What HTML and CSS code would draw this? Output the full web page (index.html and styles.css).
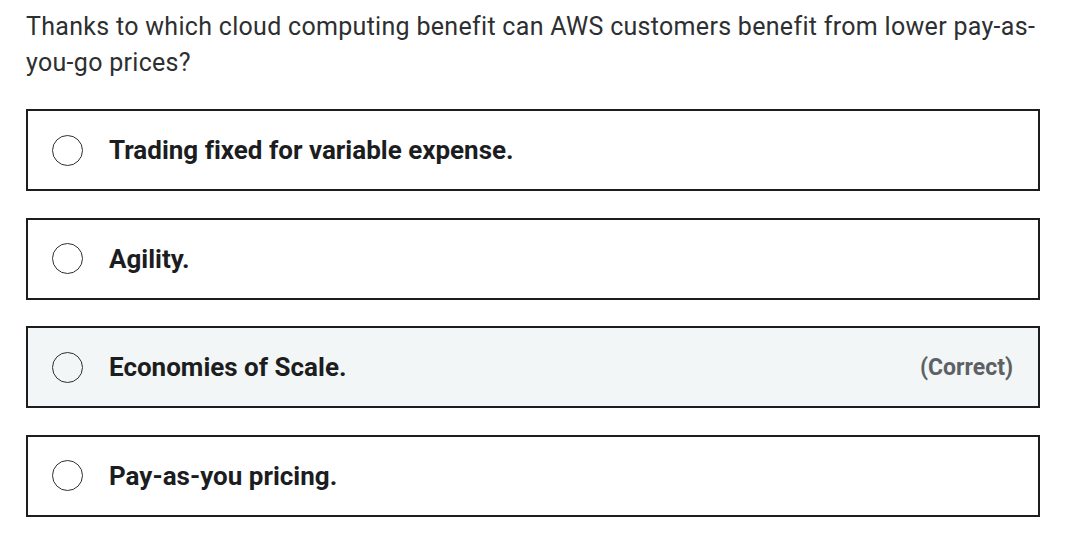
FILE: index.html
```html
<!DOCTYPE html>
<html lang="en">
<head>
    <meta charset="UTF-8">
    <title>Quiz question</title>
    <link rel="stylesheet" href="styles.css">
</head>
<body>
    <div class="question">
        <p class="prompt">Thanks to which cloud computing benefit can AWS customers benefit from lower pay-as-you-go prices?</p>

        <ul class="answers">
            <li class="answer">
                <span class="radio"></span>
                <span class="answer-text">Trading fixed for variable expense.</span>
            </li>
            <li class="answer">
                <span class="radio"></span>
                <span class="answer-text">Agility.</span>
            </li>
            <li class="answer correct">
                <span class="radio"></span>
                <span class="answer-text">Economies of Scale.</span>
                <span class="answer-tag">(Correct)</span>
            </li>
            <li class="answer">
                <span class="radio"></span>
                <span class="answer-text">Pay-as-you pricing.</span>
            </li>
        </ul>
    </div>
</body>
</html>
```

FILE: styles.css
```css
* {
    margin: 0;
    padding: 0;
    box-sizing: border-box;
}

body {
    background: #fff;
    font-family: Roboto, "Liberation Sans", Arial, sans-serif;
    font-variant-ligatures: none;
    color: #1c1d1f;
}

.question {
    width: 1066px;
    padding: 9px 26px 0 26px;
}

.prompt {
    font-size: 25px;
    line-height: 36px;
    letter-spacing: 0.3px;
    color: #2d2f31;
    margin-bottom: 28px;
}

.answers {
    list-style: none;
    width: 1014px;
    display: flex;
    flex-direction: column;
    gap: 26.5px;
}

.answer {
    height: 82px;
    border: 2px solid #1c1d1f;
    display: flex;
    align-items: center;
    padding: 0 25px 0 24px;
}

.answer.correct {
    background: #f2f6f6;
}

.radio {
    width: 31px;
    height: 31px;
    border: 1.5px solid #2d2f31;
    border-radius: 50%;
    flex-shrink: 0;
    margin-right: 26px;
}

.answer-text {
    font-size: 26px;
    font-weight: 700;
    flex: 1;
}

.answer-tag {
    font-size: 23px;
    font-weight: 700;
    color: #5d6165;
}
```
